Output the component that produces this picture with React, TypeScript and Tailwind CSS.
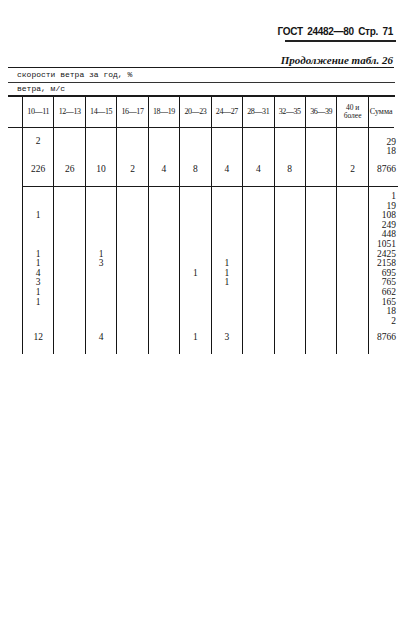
const cols = ["10—11", "12—13", "14—15", "16—17", "18—19", "20—23", "24—27", "28—31", "32—35", "36—39"];

const firstRow = ["226", "26", "10", "2", "4", "8", "4", "4", "8", "", "2"];

const sumList = ["1", "19", "108", "249", "448", "1051", "2425", "2158", "695", "765", "662", "165", "18", "2"];

// row index -> value for the lower block of each column
const lower: { rows: Record<number, string>; total: string }[] = [
  { rows: { 2: "1", 6: "1", 7: "1", 8: "4", 9: "3", 10: "1", 11: "1" }, total: "12" },
  { rows: {}, total: "" },
  { rows: { 6: "1", 7: "3" }, total: "4" },
  { rows: {}, total: "" },
  { rows: {}, total: "" },
  { rows: { 8: "1" }, total: "1" },
  { rows: { 7: "1", 8: "1", 9: "1" }, total: "3" },
  { rows: {}, total: "" },
  { rows: {}, total: "" },
  { rows: {}, total: "" },
  { rows: {}, total: "" },
];

const grid = "grid grid-cols-[14px_repeat(11,31.45px)_1fr]";
const cell = "border-l-[1.5px] border-[#151515]";

export default function App() {
  return (
    <div className="h-[631px] w-[420px] overflow-hidden bg-white font-['Liberation_Serif',serif] text-[#151515]">
      {/* Page header */}
      <div className="flex justify-end pr-[27px] pt-[26px]">
        <p className="font-['Liberation_Sans',sans-serif] text-[10px] font-bold leading-[12px] tracking-[-0.3px] [word-spacing:2px]">
          ГОСТ 24482—80 Стр. 71
        </p>
      </div>
      <div className="ml-[285px] mt-[2px] h-[1.5px] w-[111px] bg-[#222]" />
      <div className="mt-[12px] flex justify-end pr-[27px]">
        <p className="text-[11px] font-bold italic leading-[12px]">Продолжение табл. 26</p>
      </div>

      {/* Table */}
      <div className="ml-[8px] mt-[1px] w-[390px]">
        <div className="h-[1.5px] w-[386px] bg-[#1a1a1a]" />
        <div className="flex h-[13.5px] items-center pl-[9px] font-['Liberation_Mono',monospace] text-[8px] leading-[8px]">
          скорости ветра за год, %
        </div>
        <div className="h-px w-[387px] bg-[#333]" />
        <div className="flex h-[12px] items-center pl-[9px] font-['Liberation_Mono',monospace] text-[8px] leading-[8px]">
          ветра, м/с
        </div>
        <div className="h-[2px] w-[387px] bg-[#1a1a1a]" />

        {/* Column headings */}
        <div className={`${grid} h-[30px]`}>
          <div />
          {cols.map((c) => (
            <div key={c} className={`${cell} flex items-center justify-center text-[8px] tracking-[-0.4px]`}>
              {c}
            </div>
          ))}
          <div className={`${cell} flex flex-col items-center justify-center text-[7.5px] leading-[8px]`}>
            <span>40 и</span>
            <span>более</span>
          </div>
          <div className={`${cell} flex items-center pl-[1px] text-[8px]`}>Сумма</div>
        </div>
        <div className="h-[1.5px] w-[386px] bg-[#1a1a1a]" />

        {/* First block */}
        <div className={`${grid} h-[57.5px] text-[9.5px] leading-[10px]`}>
          <div />
          {firstRow.map((v, i) => (
            <div key={i} className={`${cell} flex flex-col items-center`}>
              <div className="h-[36px] pt-[8px]">{i === 0 ? "2" : ""}</div>
              <div>{v}</div>
            </div>
          ))}
          <div className={`${cell} flex flex-col items-end pr-[2px]`}>
            <div className="h-[36px] pt-[10px] text-right leading-[9px]">
              <div>29</div>
              <div>18</div>
            </div>
            <div>8766</div>
          </div>
        </div>
        <div className="ml-[14px] h-[1.5px] w-[376px] bg-[#1a1a1a]" />

        {/* Second block */}
        <div className={`${grid} h-[167px] text-[9.5px] leading-[9.6px]`}>
          <div />
          {lower.map((c, i) => (
            <div key={i} className={`${cell} flex flex-col items-center pt-[5px]`}>
              {sumList.map((_, r) => (
                <div key={r} className="h-[9.6px]">
                  {c.rows[r] ?? ""}
                </div>
              ))}
              <div className="mt-[7px] h-[10px]">{c.total}</div>
            </div>
          ))}
          <div className={`${cell} flex flex-col items-end pr-[2px] pt-[5px]`}>
            {sumList.map((v, r) => (
              <div key={r} className="h-[9.6px]">
                {v}
              </div>
            ))}
            <div className="mt-[7px] h-[10px]">8766</div>
          </div>
        </div>
      </div>
    </div>
  );
}
